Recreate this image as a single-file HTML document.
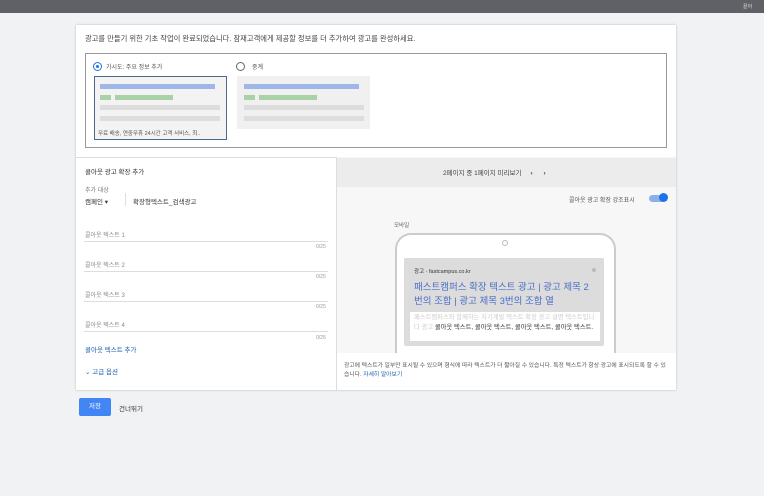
<!DOCTYPE html>
<html><head><meta charset="utf-8"><style>
*{box-sizing:border-box;margin:0;padding:0}
body{width:764px;height:496px;background:#f1f2f3;font-family:"Liberation Sans","Noto Sans CJK KR",sans-serif;position:relative;overflow:hidden;color:#333}
.a{position:absolute}
.t{font-size:7px;white-space:nowrap}
.bar{height:5px;position:absolute}
</style></head><body>
<div class="a" style="left:0;top:0;width:764px;height:13px;background:#5f6166"></div>
<div class="a t" style="left:743px;top:3px;color:#ddd;font-size:5px">끝어</div>
<div class="a" style="left:76px;top:25px;width:600px;height:365px;background:#fff;box-shadow:0 0 2px rgba(0,0,0,.25)"></div>
<div class="a t" style="left:85px;top:34px;color:#444;font-size:7.3px">광고를 만들기 위한 기초 작업이 완료되었습니다. 잠재고객에게 제공할 정보를 더 추가하여 광고를 완성하세요.</div>
<div class="a" style="left:85px;top:53px;width:582px;height:95px;border:1px solid #999"></div>
<div class="a" style="left:93px;top:62px;width:9px;height:9px;border:1px solid #1a73e8;border-radius:50%"><div class="a" style="left:2px;top:2px;width:3px;height:3px;background:#1a73e8;border-radius:50%"></div></div>
<div class="a t" style="left:106px;top:62px;font-size:6px;color:#555">가시도: 주요 정보 추가</div>
<div class="a" style="left:236px;top:62px;width:9px;height:9px;border:1px solid #666;border-radius:50%"></div>
<div class="a t" style="left:252px;top:62px;font-size:6px;color:#555">중계</div>
<div class="a" style="left:94px;top:76px;width:133px;height:64px;border:1px solid #4a6b8a;background:#f3f3f3"></div>
<div class="bar" style="left:100px;top:84px;width:115px;background:#9fb6e8"></div>
<div class="bar" style="left:100px;top:95px;width:11px;background:#a9d2a8"></div>
<div class="bar" style="left:115px;top:95px;width:58px;background:#a9d2a8"></div>
<div class="bar" style="left:100px;top:105px;width:120px;background:#ddd"></div>
<div class="bar" style="left:100px;top:116px;width:120px;background:#ddd"></div>
<div class="a t" style="left:98px;top:129px;font-size:5.5px;color:#555">무료 배송, 연중무휴 24시간 고객 서비스, 최..</div>
<div class="a" style="left:237px;top:76px;width:133px;height:53px;background:#f0f0f0"></div>
<div class="bar" style="left:244px;top:84px;width:115px;background:#9fb6e8"></div>
<div class="bar" style="left:244px;top:95px;width:11px;background:#a9d2a8"></div>
<div class="bar" style="left:259px;top:95px;width:58px;background:#a9d2a8"></div>
<div class="bar" style="left:244px;top:105px;width:120px;background:#ddd"></div>
<div class="bar" style="left:244px;top:116px;width:120px;background:#ddd"></div>
<div class="a" style="left:76px;top:157px;width:600px;height:1px;background:#ddd"></div>
<div class="a" style="left:336px;top:157px;width:340px;height:233px;background:#f7f7f7;border-left:1px solid #ddd"></div>
<div class="a" style="left:337px;top:158px;width:339px;height:29px;background:#ececec"></div>
<div class="a t" style="left:443px;top:167px;font-size:6.5px;color:#444">2페이지 중 1페이지 미리보기 &nbsp;&nbsp;&nbsp; <b>‹</b> &nbsp;&nbsp;&nbsp;&nbsp; <b>›</b></div>
<div class="a t" style="left:569px;top:195px;font-size:6px;color:#555">콜아웃 광고 확장 강조표시</div>
<div class="a" style="left:649px;top:195px;width:16px;height:7px;background:#8ab0ea;border-radius:4px"></div>
<div class="a" style="left:659px;top:193px;width:9px;height:9px;background:#1a73e8;border-radius:50%"></div>
<div class="a t" style="left:394px;top:221px;font-size:5.5px;color:#666">모바일</div>
<div class="a" style="left:395px;top:233px;width:221px;height:140px;border:2px solid #ccc;border-bottom:none;border-radius:16px 16px 0 0;background:#fff"></div>
<div class="a" style="left:502px;top:240px;width:6px;height:6px;border:1px solid #bbb;border-radius:50%"></div>
<div class="a" style="left:404px;top:258px;width:200px;height:88px;background:#dcdcdc;border-radius:2px"></div>
<div class="a t" style="left:414px;top:267px;font-size:5.5px;color:#333">광고 · fastcampus.co.kr</div>
<div class="a" style="left:592px;top:268px;width:4px;height:4px;background:#bbb;border-radius:50%"></div>
<div class="a" style="left:414px;top:281px;width:180px;font-size:9.5px;line-height:14px;color:#4a6fc7;word-break:break-all">패스트캠퍼스 확장 텍스트 광고 | 광고 제목 2번의 조합 | 광고 제목 3번의 조합 열</div>
<div class="a" style="left:410px;top:312px;width:190px;height:29px;background:#fff"></div>
<div class="a" style="left:414px;top:313px;width:182px;font-size:6.3px;line-height:9.5px;color:#333"><span style="color:#ccc">패스트캠퍼스와 함께하는 자기계발 텍스트 확장 광고 설명 텍스트입니다 광고</span> 콜아웃 텍스트, 콜아웃 텍스트, 콜아웃 텍스트, 콜아웃 텍스트.</div>
<div class="a" style="left:337px;top:353px;width:339px;height:37px;background:#fff"></div>
<div class="a" style="left:344px;top:362px;width:326px;font-size:5.8px;line-height:9px;color:#555">광고에 텍스트가 일부만 표시될 수 있으며 형식에 따라 텍스트가 더 짧아질 수 있습니다. 특정 텍스트가 항상 광고에 표시되도록 할 수 있습니다. <span style="color:#1a5fb4">자세히 알아보기</span></div>
<div class="a t" style="left:85px;top:166px;font-size:6.5px;color:#333">콜아웃 광고 확장 추가</div>
<div class="a t" style="left:85px;top:185px;font-size:6px;color:#777">추가 대상</div>
<div class="a t" style="left:85px;top:196px;font-size:6.5px;color:#333">캠페인 ▾</div>
<div class="a" style="left:125px;top:193px;width:1px;height:13px;background:#ddd"></div>
<div class="a t" style="left:133px;top:196px;font-size:6.5px;color:#333">확장형텍스트_검색광고</div>
<div class="a t" style="left:85px;top:230px;font-size:6px;color:#888">콜아웃 텍스트 1</div>
<div class="a" style="left:84px;top:241px;width:244px;height:1px;background:#ddd"></div>
<div class="a t" style="left:316px;top:244px;font-size:5px;color:#999">0/25</div>
<div class="a t" style="left:85px;top:260px;font-size:6px;color:#888">콜아웃 텍스트 2</div>
<div class="a" style="left:84px;top:271px;width:244px;height:1px;background:#ddd"></div>
<div class="a t" style="left:316px;top:274px;font-size:5px;color:#999">0/25</div>
<div class="a t" style="left:85px;top:290px;font-size:6px;color:#888">콜아웃 텍스트 3</div>
<div class="a" style="left:84px;top:301px;width:244px;height:1px;background:#ddd"></div>
<div class="a t" style="left:316px;top:304px;font-size:5px;color:#999">0/25</div>
<div class="a t" style="left:85px;top:320px;font-size:6px;color:#888">콜아웃 텍스트 4</div>
<div class="a" style="left:84px;top:331px;width:244px;height:1px;background:#ddd"></div>
<div class="a t" style="left:316px;top:335px;font-size:5px;color:#999">0/25</div>
<div class="a t" style="left:85px;top:344px;font-size:6.5px;color:#1a5fb4">콜아웃 텍스트 추가</div>
<div class="a t" style="left:85px;top:366px;font-size:6.5px;color:#1a5fb4">⌄ 고급 옵션</div>
<div class="a" style="left:79px;top:398px;width:32px;height:18px;background:#4285f4;border-radius:2px;color:#fff;font-size:6.5px;text-align:center;line-height:18px">저장</div>
<div class="a t" style="left:119px;top:403px;font-size:6.5px;color:#333">건너뛰기</div>
</body></html>
